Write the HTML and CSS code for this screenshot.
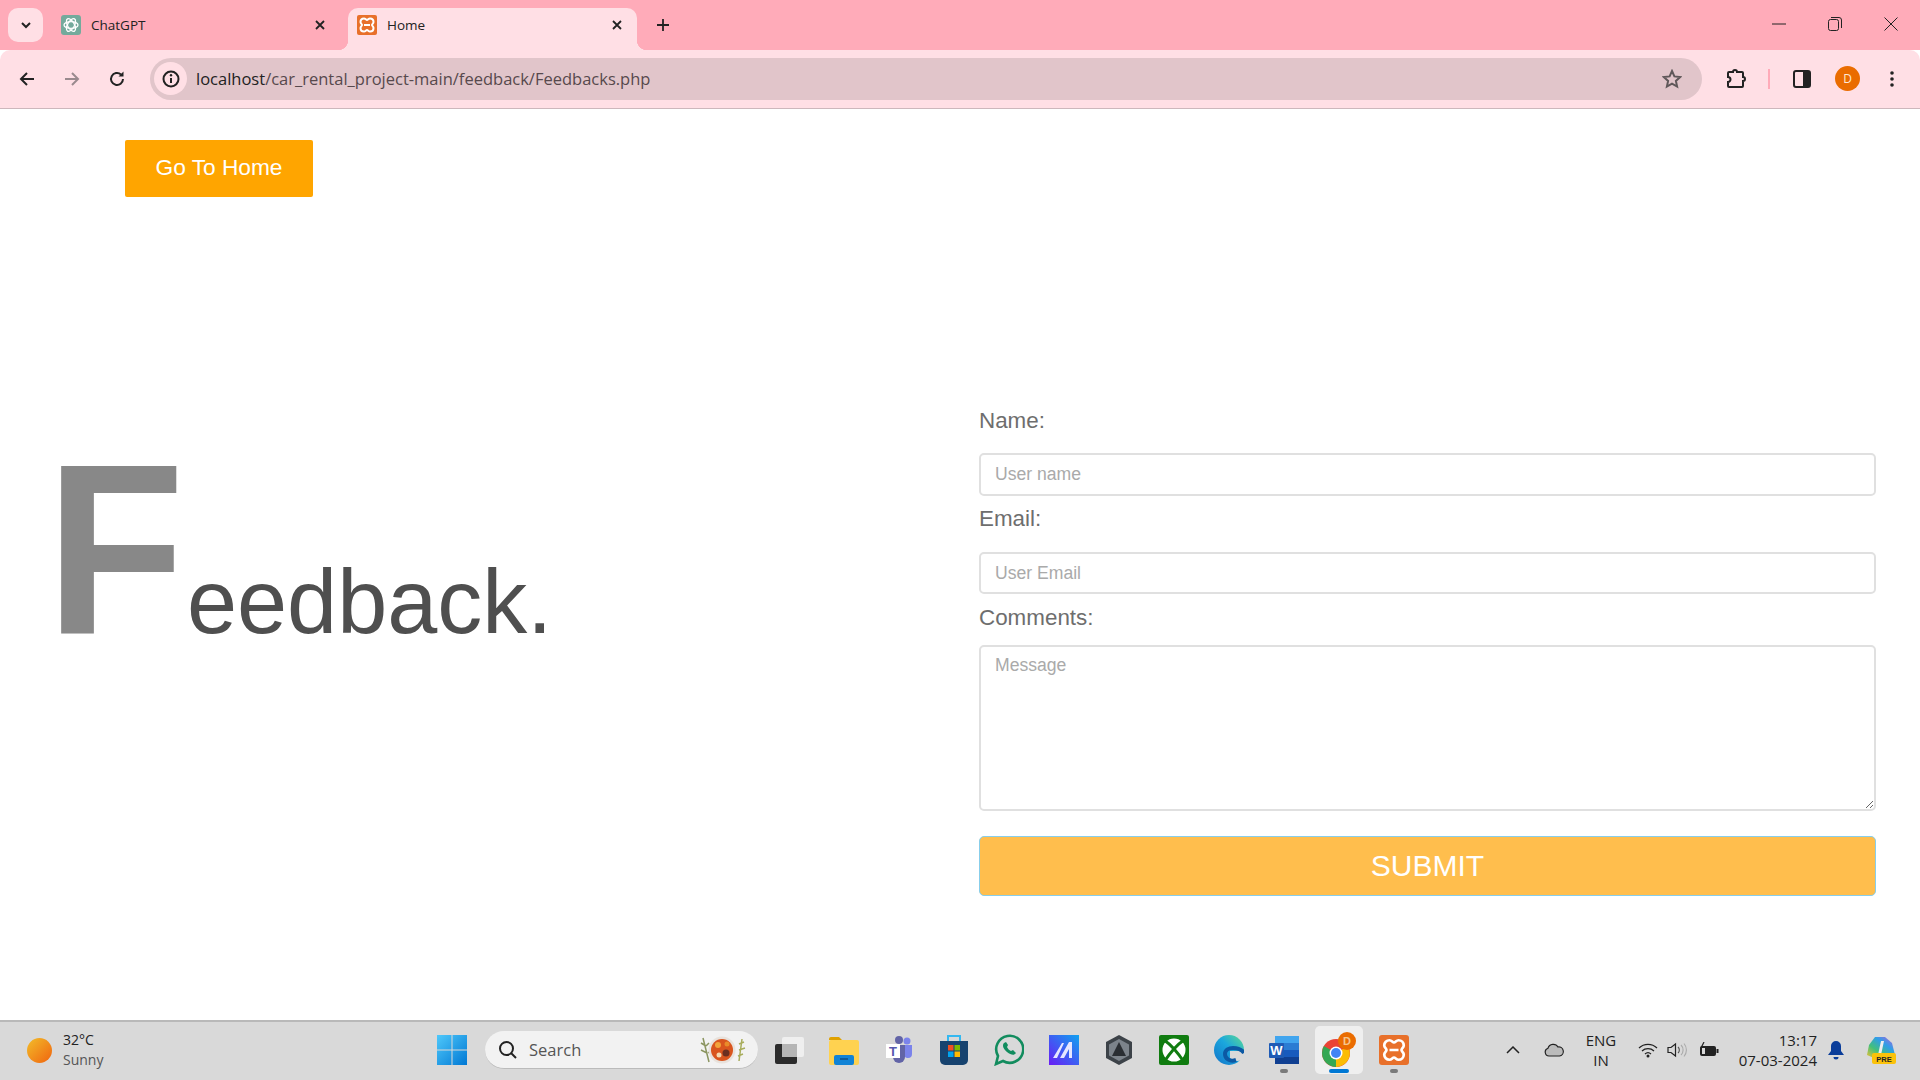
FILE: index.html
```html
<!DOCTYPE html>
<html lang="en">
<head>
  <meta charset="UTF-8" />
  <title>Home</title>
  <link rel="stylesheet" href="styles.css">
</head>
<body>
  <div class="tab-strip">
    <button class="tab-search"><svg width="12" height="12" viewBox="0 0 12 12"><path d="M2 4l4 4 4-4" fill="none" stroke="#222" stroke-width="2"/></svg></button>
    <div class="tab">
      <svg class="tab-icon" width="20" height="20" viewBox="0 0 20 20"><rect width="20" height="20" rx="3" fill="#74aa9c"/><g fill="none" stroke="#fff" stroke-width="1.3"><ellipse cx="10" cy="10" rx="7" ry="3.4"/><ellipse cx="10" cy="10" rx="7" ry="3.4" transform="rotate(60 10 10)"/><ellipse cx="10" cy="10" rx="7" ry="3.4" transform="rotate(120 10 10)"/></g></svg>
      <span class="tab-title">ChatGPT</span>
      <svg class="tab-close" width="12" height="12" viewBox="0 0 12 12"><path d="M2 2l8 8M10 2l-8 8" stroke="#222" stroke-width="1.8"/></svg>
    </div>
    <div class="tab tab-active">
      <svg class="tab-icon" width="20" height="20" viewBox="0 0 20 20"><rect width="20" height="20" rx="2" fill="#e8702a"/><path d="M7 3.500C8.500 3.500 9 5 10 5S11.500 3.500 13 3.500C15 3.500 16.500 5 16.500 7 16.500 8.500 15 9 15 10S16.500 11.500 16.500 13C16.500 15 15 16.500 13 16.500 11.500 16.500 11 15 10 15S8.500 16.500 7 16.500C5 16.500 3.500 15 3.500 13 3.500 11.500 5 11 5 10S3.500 8.500 3.500 7C3.500 5 5 3.500 7 3.500ZM7 10h6" fill="none" stroke="#fff" stroke-width="2"/></svg>
      <span class="tab-title">Home</span>
      <svg class="tab-close" width="12" height="12" viewBox="0 0 12 12"><path d="M2 2l8 8M10 2l-8 8" stroke="#222" stroke-width="1.8"/></svg>
    </div>
    <svg class="new-tab" width="14" height="14" viewBox="0 0 14 14"><path d="M7 1v12M1 7h12" stroke="#222" stroke-width="1.8"/></svg>
    <div class="window-controls">
      <svg width="14" height="14" viewBox="0 0 14 14"><path d="M0 7h14" stroke="#222" stroke-width="1"/></svg>
      <svg width="14" height="14" viewBox="0 0 14 14"><rect x=".5" y="2.5" width="10" height="11" rx="2" fill="none" stroke="#222"/><path d="M3 .5h8a2.500 2.500 0 0 1 2.500 2.500v8" fill="none" stroke="#222"/></svg>
      <svg width="14" height="14" viewBox="0 0 14 14"><path d="M.5.5l13 13M13.500.5l-13 13" stroke="#222" stroke-width="1"/></svg>
    </div>
  </div>

  <div class="toolbar">
    <svg class="nav-btn" width="18" height="18" viewBox="0 0 18 18"><path d="M16 9H3M9 3L3 9l6 6" fill="none" stroke="#222" stroke-width="2"/></svg>
    <svg class="nav-btn" width="18" height="18" viewBox="0 0 18 18"><path d="M2 9h13M9 3l6 6-6 6" fill="none" stroke="#9a8a8e" stroke-width="2"/></svg>
    <svg class="nav-btn" width="18" height="18" viewBox="0 0 18 18"><path d="M15 9a6 6 0 1 1-2-4.500" fill="none" stroke="#222" stroke-width="2"/><path d="M15.500 1.500v5h-5z" fill="#222"/></svg>
    <div class="omnibox">
      <span class="site-info"><svg width="18" height="18" viewBox="0 0 18 18"><circle cx="9" cy="9" r="7.5" fill="none" stroke="#222" stroke-width="2"/><path d="M9 8v5" stroke="#222" stroke-width="2"/><circle cx="9" cy="5.300" r="1.2" fill="#222"/></svg></span>
      <span class="url"><span class="url-host">localhost</span>/car_rental_project-main/feedback/Feedbacks.php</span>
      <svg class="star" width="20" height="20" viewBox="0 0 20 20"><path d="M10 2l2.400 5.400 5.800.6-4.300 3.900 1.200 5.700L10 14.700l-5.100 2.900 1.200-5.700L1.800 8l5.800-.6z" fill="none" stroke="#60585a" stroke-width="2"/></svg>
    </div>
    <svg class="tool-ext" width="20" height="20" viewBox="0 0 20 20"><path d="M3 3h4a2 2 0 0 1 4 0h5a1 1 0 0 1 1 1v4a2 2 0 0 1 0 4v5a1 1 0 0 1-1 1H3a1 1 0 0 1-1-1v-4a2.500 2.500 0 0 0 0-5V4a1 1 0 0 1 1-1z" fill="none" stroke="#222" stroke-width="2"/></svg>
    <span class="tool-sep"></span>
    <svg class="tool-panel" width="18" height="18" viewBox="0 0 18 18"><rect x="1" y="1" width="16" height="16" rx="2" fill="none" stroke="#222" stroke-width="2"/><rect x="10" y="1" width="7" height="16" fill="#222"/></svg>
    <span class="avatar">D</span>
    <svg class="tool-menu" width="6" height="18" viewBox="0 0 6 18"><circle cx="3" cy="3" r="1.8" fill="#222"/><circle cx="3" cy="9" r="1.8" fill="#222"/><circle cx="3" cy="15" r="1.8" fill="#222"/></svg>
  </div>

  <main class="page">
    <a class="home-btn" href="#">Go To Home</a>
    <section class="feedback">
      <h1 class="title"><span class="title-cap">F</span>eedback.</h1>
      <form class="form">
        <label class="lbl lbl-name">Name:</label>
        <input class="field" type="text" placeholder="User name">
        <label class="lbl lbl-email">Email:</label>
        <input class="field field-email" type="text" placeholder="User Email">
        <label class="lbl lbl-comments">Comments:</label>
        <textarea class="field field-msg" placeholder="Message"></textarea>
        <button type="button" class="submit-btn">SUBMIT</button>
      </form>
    </section>
  </main>

  <footer class="taskbar">
    <div class="weather">
      <span class="sun"></span>
      <div class="weather-text"><div>32°C</div><div class="weather-sub">Sunny</div></div>
    </div>
    <div class="apps">
      <span class="app"><svg width="30" height="30" viewBox="0 0 30 30"><defs><linearGradient id="win" x1="0" y1="0" x2="1" y2="1"><stop offset="0" stop-color="#4fc8fa"/><stop offset="1" stop-color="#0078d4"/></linearGradient></defs><path d="M0 0h14.500v14.500H0zM15.500 0H30v14.500H15.500zM0 15.500h14.500V30H0zM15.500 15.500H30V30H15.500z" fill="url(#win)"/></svg></span>
      <div class="search">
        <svg width="20" height="20" viewBox="0 0 20 20"><circle cx="8.500" cy="8.500" r="6.500" fill="none" stroke="#222" stroke-width="2"/><path d="M13 13l5 5" stroke="#222" stroke-width="2"/></svg>
        <span class="search-label">Search</span>
        <svg class="search-art" width="56" height="30" viewBox="0 0 56 30"><path d="M8 3l6 24M6 8l5 3M14 8l-3 3M6 15l6 3M17 15l-4 3" stroke="#8b9560" stroke-width="1.5" fill="none"/><circle cx="27" cy="15" r="13.500" fill="#e8e2dc"/><circle cx="27" cy="15" r="11" fill="#d9551e"/><circle cx="23" cy="10" r="3" fill="#f2a33a"/><circle cx="31" cy="18" r="3.500" fill="#6b2f20"/><circle cx="24" cy="20" r="2.500" fill="#f4d9b0"/><circle cx="32" cy="9" r="2.500" fill="#e98b2a"/><path d="M47 4l-3 22M44 9l5-2M44 15l6-2M43 21l5-2" stroke="#a8ad5c" stroke-width="1.5" fill="none"/></svg>
      </div>
      <span class="app"><svg width="30" height="30" viewBox="0 0 30 30"><rect x="1" y="9" width="22" height="20" rx="2" fill="#2b2b2b"/><rect x="8" y="2" width="22" height="20" rx="2" fill="#f2f2f2" opacity=".85"/><rect x="8" y="9" width="15" height="13" fill="#b5b5b5"/></svg></span>
      <span class="app"><svg width="30" height="30" viewBox="0 0 30 30"><path d="M0 4a2 2 0 0 1 2-2h8l3 3h-13z" fill="#e0a100"/><rect y="5" width="30" height="25" rx="2" fill="#ffd250"/><rect x="5" y="20" width="20" height="10" rx="2" fill="#1183d6"/><path d="M11 24h8" stroke="#0b4f8a" stroke-width="1.5"/></svg></span>
      <span class="app"><svg width="30" height="30" viewBox="0 0 30 30"><circle cx="23" cy="6" r="3.500" fill="#7b83eb"/><circle cx="15" cy="5" r="4" fill="#6264a7"/><path d="M19 10h9v9a4 4 0 0 1-4 4 4 4 0 0 1-3-1z" fill="#7b83eb"/><path d="M9 10h12v12a6 6 0 0 1-12 0z" fill="#6264a7"/><rect x="2" y="9" width="14" height="14" fill="#fff"/><text x="9" y="21" class="icon-letter icon-letter-teams" text-anchor="middle">T</text></svg></span>
      <span class="app"><svg width="30" height="32" viewBox="0 0 30 32"><path d="M9 7V2h12v5" fill="none" stroke="#35b8f0" stroke-width="2"/><path d="M1 7h28v19a5 5 0 0 1-5 5H6a5 5 0 0 1-5-5z" fill="#17436f"/><rect x="9" y="11" width="5.500" height="5.500" fill="#f25022"/><rect x="15.500" y="11" width="5.500" height="5.500" fill="#7fba00"/><rect x="9" y="17.500" width="5.500" height="5.500" fill="#00a4ef"/><rect x="15.500" y="17.500" width="5.500" height="5.500" fill="#ffb900"/></svg></span>
      <span class="app"><svg width="30" height="32" viewBox="0 0 30 32"><path d="M2 30l2-8A13.500 13.500 0 1 1 9 27z" fill="none" stroke="#128c5e" stroke-width="2.6"/><path d="M10 9c-2 2-1 6 3 9s7 4 9 1l-3-3-2 1c-2-1-3-2-4-4l1-2-2-3z" fill="#128c5e"/></svg></span>
      <span class="app"><svg width="30" height="30" viewBox="0 0 30 30"><defs><linearGradient id="mx" x1="1" y1="0" x2="0" y2="1"><stop offset="0" stop-color="#0fa2f0"/><stop offset="1" stop-color="#6a1cf5"/></linearGradient></defs><rect width="30" height="30" fill="url(#mx)"/><path d="M4 23L13 8h2L8 23zM11 23l9-16h3v16h-3v-9l-5 9z" fill="#e6e6ff"/></svg></span>
      <span class="app"><svg width="28" height="32" viewBox="0 0 28 32"><path d="M14 1l13 7v16l-13 7-13-7V8z" fill="#3c4248"/><path d="M14 5l10 5.500v11L14 27 4 21.500v-11z" fill="#7c838b"/><path d="M14 8l7 14H7z" fill="#2a2e33"/></svg></span>
      <span class="app"><svg width="30" height="30" viewBox="0 0 30 30"><rect width="30" height="30" rx="2" fill="#107c10"/><circle cx="15" cy="15" r="11.500" fill="#fff"/><path d="M5 5C11 9 19 18 25 27M25 5C19 9 11 18 5 27" fill="none" stroke="#107c10" stroke-width="3"/></svg></span>
      <span class="app"><svg width="30" height="30" viewBox="0 0 30 30"><defs><linearGradient id="edge" x1="0" y1="1" x2="1" y2="0"><stop offset="0" stop-color="#1173c9"/><stop offset=".55" stop-color="#1ba7dd"/><stop offset="1" stop-color="#5fdc8e"/></linearGradient></defs><circle cx="15" cy="15" r="15" fill="url(#edge)"/><path d="M16 16h14l1 14H19c3-1 7-2 8-5-3 2-8 1-11-2z" fill="#d9d9d9"/><path d="M22 25c-6 2-11-1-11-6 0-4 4-6 8-6 5 0 9 2 11 5" fill="none" stroke="#0c59a4" stroke-width="4"/><path d="M17 19c1-2 5-2 7 0-1 1-6 2-7 0z" fill="#d9d9d9"/></svg></span>
      <span class="app app-open"><svg width="30" height="30" viewBox="0 0 30 30"><rect x="6" y="1" width="24" height="7" fill="#41a5ee"/><rect x="6" y="8" width="24" height="7" fill="#2b7cd3"/><rect x="6" y="15" width="24" height="7" fill="#185abd"/><rect x="6" y="22" width="24" height="7" fill="#103f91"/><rect y="8" width="15" height="15" rx="1" fill="#1f5bb5"/><text x="7.500" y="20" class="icon-letter" text-anchor="middle">W</text></svg></span>
      <span class="app app-open app-active"><svg width="36" height="36" viewBox="0 0 36 36"><circle cx="15" cy="21" r="14" fill="#ea4335"/><path d="M15 21l12-7a14 14 0 0 1-12 21z" fill="#fbbc04"/><path d="M15 35A14 14 0 0 1 2.900 14l12.100 7z" fill="#34a853"/><circle cx="15" cy="21" r="6.500" fill="#fff"/><circle cx="15" cy="21" r="5" fill="#4285f4"/><circle cx="26" cy="9" r="9" fill="#ea6c00"/><text x="26" y="13" class="icon-letter icon-letter-d" text-anchor="middle">D</text></svg></span>
      <span class="app app-open"><svg width="30" height="30" viewBox="0 0 20 20"><rect width="20" height="20" rx="2" fill="#e8702a"/><path d="M7 3.500C8.500 3.500 9 5 10 5S11.500 3.500 13 3.500C15 3.500 16.500 5 16.500 7 16.500 8.500 15 9 15 10S16.500 11.500 16.500 13C16.500 15 15 16.500 13 16.500 11.500 16.500 11 15 10 15S8.500 16.500 7 16.500C5 16.500 3.500 15 3.500 13 3.500 11.500 5 11 5 10S3.500 8.500 3.500 7C3.500 5 5 3.500 7 3.500ZM7 10h6" fill="none" stroke="#fff" stroke-width="1.800"/></svg></span>
    </div>
    <div class="tray">
      <svg class="tray-chevron" width="14" height="8" viewBox="0 0 14 8"><path d="M1 7l6-6 6 6" fill="none" stroke="#222" stroke-width="1.5"/></svg>
      <svg class="tray-cloud" width="20" height="14" viewBox="0 0 20 14"><path d="M5 13a4 4 0 0 1-1-7.800 5.500 5.500 0 0 1 10-1.200A4.500 4.500 0 0 1 15.500 13z" fill="#bbb" stroke="#222" stroke-width="1.2"/></svg>
      <div class="tray-lang"><div>ENG</div><div>IN</div></div>
      <svg class="tray-wifi" width="20" height="16" viewBox="0 0 20 16"><path d="M1 6a13 13 0 0 1 18 0M4 9a9 9 0 0 1 12 0M7 12a4.500 4.500 0 0 1 6 0" fill="none" stroke="#222" stroke-width="1.3"/><circle cx="10" cy="14" r="1.5" fill="#222"/></svg>
      <svg class="tray-sound" width="20" height="16" viewBox="0 0 20 16"><path d="M1 5.500h3L8.500 2v12L4 10.500H1z" fill="none" stroke="#222" stroke-width="1.2"/><path d="M11 5a4 4 0 0 1 0 6" fill="none" stroke="#555" stroke-width="1.1"/><path d="M14 3a7 7 0 0 1 0 10M17 1.500a10 10 0 0 1 0 13" fill="none" stroke="#aaa" stroke-width="1.1"/></svg>
      <svg class="tray-battery" width="20" height="16" viewBox="0 0 20 16"><rect x="1" y="4" width="16" height="10" rx="2" fill="#222"/><rect x="17.500" y="7" width="2" height="4" fill="#222"/><path d="M5 0L2 6h3L4 10" fill="none" stroke="#222" stroke-width="1.2"/><rect x="3" y="6" width="3" height="6" fill="#d9d9d9"/></svg>
      <div class="tray-clock"><div>13:17</div><div>07-03-2024</div></div>
      <svg class="tray-bell" width="16" height="20" viewBox="0 0 16 20"><path d="M8 1a5 5 0 0 1 5 5v5l3 4H0l3-4V6a5 5 0 0 1 5-5z" fill="#0a3d9a"/><path d="M5.500 17h5a2.500 2.500 0 0 1-5 0z" fill="#0a3d9a"/></svg>
      <svg class="tray-copilot" width="30" height="30" viewBox="0 0 30 30"><defs><linearGradient id="cop" x1="0" y1="1" x2="1" y2="0"><stop offset="0" stop-color="#f2c230"/><stop offset=".35" stop-color="#43c07a"/><stop offset=".65" stop-color="#2f9ee8"/><stop offset="1" stop-color="#c25bd6"/></linearGradient></defs><path d="M9 2h10l7 6 3 12-6 3H8l-7-3 2-10z" fill="url(#cop)"/><path d="M15 6l3 0-3 14h-3z" fill="#eee"/><rect x="6" y="18" width="24" height="11" rx="2" fill="#fbc20a"/><text x="18" y="27" class="icon-letter icon-letter-pre" text-anchor="middle">PRE</text></svg>
    </div>
  </footer>
</body>
</html>
```

FILE: styles.css
```css
* {
  box-sizing: border-box;
  margin: 0;
  padding: 0;
}

html, body {
  height: 100%;
}

body {
  display: flex;
  flex-direction: column;
  height: 1080px;
  overflow: hidden;
  font-family: "Liberation Sans", Arial, sans-serif;
  background-color: white;
}

svg {
  display: block;
  flex-shrink: 0;
}

/* browser chrome */
.tab-strip {
  display: flex;
  align-items: flex-end;
  height: 50px;
  padding-left: 8px;
  background-color: #ffabb9;
  font-family: "Open Sans", sans-serif;
  color: #222;
}

.tab-search {
  display: flex;
  align-items: center;
  justify-content: center;
  width: 35px;
  height: 34px;
  margin-bottom: 8px;
  border: none;
  border-radius: 10px;
  background-color: #ffdfe5;
}

.tab {
  position: relative;
  display: flex;
  align-items: center;
  width: 280px;
  height: 42px;
  margin-left: 9px;
  padding: 0 6px 8px 9px;
  font-size: 13.5px;
  border-radius: 10px 10px 0 0;
}

.tab + .tab {
  margin-left: 16px;
}

.tab-active {
  width: 289px;
  padding-right: 14px;
  background-color: #ffdfe5;
}

.tab-active::before,
.tab-active::after {
  content: "";
  position: absolute;
  bottom: 0;
  width: 10px;
  height: 10px;
}

.tab-active::before {
  left: -10px;
  background: radial-gradient(circle at 0 0, transparent 10px, #ffdfe5 10.5px);
}

.tab-active::after {
  right: -10px;
  background: radial-gradient(circle at 100% 0, transparent 10px, #ffdfe5 10.5px);
}

.tab-icon {
  margin-right: 10px;
}

.tab-title {
  flex: 1;
}

.new-tab {
  margin: 0 0 18px 19px;
}

.window-controls {
  display: flex;
  gap: 42px;
  margin: 0 22px 19px auto;
  align-items: center;
}

.toolbar {
  display: flex;
  align-items: center;
  height: 59px;
  padding: 0 0 1px 18px;
  background-color: #ffdfe5;
  border-bottom: 1px solid #cdb7bc;
  border-radius: 10px 10px 0 0;
  color: #222;
}

.nav-btn {
  margin-right: 27px;
}

.nav-btn:nth-child(3) {
  margin-right: 24px;
}

.omnibox {
  display: flex;
  align-items: center;
  width: 1552px;
  height: 42px;
  padding: 0 20px 0 4px;
  border-radius: 21px;
  background-color: #e1c5ca;
  font-family: "Open Sans", sans-serif;
}

.site-info {
  display: flex;
  align-items: center;
  justify-content: center;
  width: 33px;
  height: 33px;
  border-radius: 50%;
  background-color: #ffdfe5;
}

.url {
  flex: 1;
  margin-left: 9px;
  font-size: 16.5px;
  color: #57494d;
}

.url-host {
  color: #222;
}

.tool-ext {
  margin-left: 24px;
}

.tool-sep {
  width: 2px;
  height: 20px;
  margin: 0 23px 0 22px;
  background-color: #ffabb9;
}

.avatar {
  display: flex;
  align-items: center;
  justify-content: center;
  width: 25px;
  height: 25px;
  margin-left: 24px;
  border-radius: 50%;
  background-color: #ea6c00;
  color: #ffe9d6;
  font-family: "Open Sans", sans-serif;
  font-size: 12px;
}

.tool-menu {
  margin-left: 29px;
}

/* page content */
.page {
  flex: 1;
  display: flex;
  flex-direction: column;
  align-items: flex-start;
}

.home-btn {
  margin: 31px 0 0 125px;
  width: 188px;
  height: 57px;
  line-height: 55px;
  text-align: center;
  text-decoration: none;
  font-size: 22.7px;
  color: white;
  background-color: orange;
  border-radius: 2px;
}

.feedback {
  display: flex;
  align-items: flex-start;
  width: 100%;
  margin-top: 211px;
  padding-right: 44px;
}

.title {
  width: 933px;
  margin-left: 46px;
  font-size: 90px;
  font-weight: normal;
  color: #4f4f4f;
}

.title-cap {
  display: inline-block;
  width: 141px;
  font-size: 244px;
  font-weight: bold;
  color: #888;
  transform: scaleX(0.93);
  transform-origin: left;
}

.form {
  flex: 1;
  display: flex;
  flex-direction: column;
}

.lbl {
  font-size: 22.4px;
  line-height: 26px;
  color: #6e6e6e;
}

.lbl-name {
  margin-bottom: 19px;
}

.lbl-email {
  margin: 10px 0 20px;
}

.lbl-comments {
  margin: 11px 0 14px;
}

.field {
  height: 43px;
  padding: 0 14px;
  border: 2px solid #e0e0e0;
  border-radius: 5px;
  font-family: "Liberation Sans", Arial, sans-serif;
  font-size: 17.6px;
  color: #444;
  background-color: white;
}

.field::placeholder {
  color: #aaa;
}

.field-email {
  height: 42px;
}

.field-msg {
  height: 166px;
  padding-top: 8px;
}

.submit-btn {
  height: 60px;
  margin-top: 25px;
  border: 1.5px solid #87ceeb;
  border-radius: 5px;
  background-color: #ffbe4d;
  color: #fff;
  font-family: "Liberation Sans", Arial, sans-serif;
  font-size: 30px;
}

/* windows taskbar */
.taskbar {
  display: grid;
  grid-template-columns: 424px auto 1fr;
  align-items: center;
  height: 60px;
  padding-bottom: 2px;
  background-color: #d9d9d9;
  border-top: 2px solid #b9b9b9;
  font-family: "Open Sans", sans-serif;
  color: #222;
}

.weather {
  display: flex;
  align-items: center;
  padding-left: 27px;
  font-size: 14px;
  line-height: 20px;
}

.sun {
  width: 25px;
  height: 25px;
  margin-right: 11px;
  border-radius: 50%;
  background: linear-gradient(135deg, #f2bd2a, #f0640f);
}

.weather-sub {
  color: #555;
}

.apps {
  display: flex;
  align-items: center;
}

.app {
  position: relative;
  display: flex;
  align-items: center;
  justify-content: center;
  width: 55px;
  height: 48px;
}

.app-open::after {
  content: "";
  position: absolute;
  bottom: 1px;
  left: 50%;
  width: 8px;
  height: 4px;
  margin-left: -4px;
  border-radius: 2px;
  background-color: #7a7a7a;
}

.app-active {
  width: 48px;
  margin: 0 3.5px;
  background-color: #efefef;
  border-radius: 5px;
}

.app-active::after {
  width: 20px;
  margin-left: -10px;
  background-color: #0078d4;
}

.icon-letter {
  font-family: "Liberation Sans", Arial, sans-serif;
  font-size: 13px;
  font-weight: bold;
  fill: #fff;
}

.icon-letter-teams {
  fill: #5558af;
}

.icon-letter-d {
  font-size: 11px;
  fill: #f6c58f;
}

.icon-letter-pre {
  font-size: 7.5px;
  fill: #222;
}

.search {
  display: flex;
  align-items: center;
  width: 273px;
  height: 38px;
  margin: 0 3px 0 6px;
  padding: 0 7px 0 13px;
  border-radius: 19px;
  background-color: #f2f2f2;
  border-bottom: 1px solid #bbb;
}

.search-label {
  flex: 1;
  margin-left: 11px;
  font-size: 16.5px;
  color: #555;
}

.tray {
  display: flex;
  align-items: center;
  font-size: 15px;
}

.tray-chevron {
  margin-left: 85px;
}

.tray-cloud {
  margin-left: 24px;
}

.tray-lang {
  width: 32px;
  margin-left: 21px;
  text-align: center;
  line-height: 20px;
}

.tray-wifi {
  margin-left: 21px;
}

.tray-sound {
  margin-left: 9px;
}

.tray-battery {
  margin-left: 12px;
}

.tray-clock {
  width: 90px;
  margin-left: 8px;
  text-align: right;
  line-height: 20px;
}

.tray-bell {
  margin-left: 11px;
}

.tray-copilot {
  margin-left: 22px;
}
```
